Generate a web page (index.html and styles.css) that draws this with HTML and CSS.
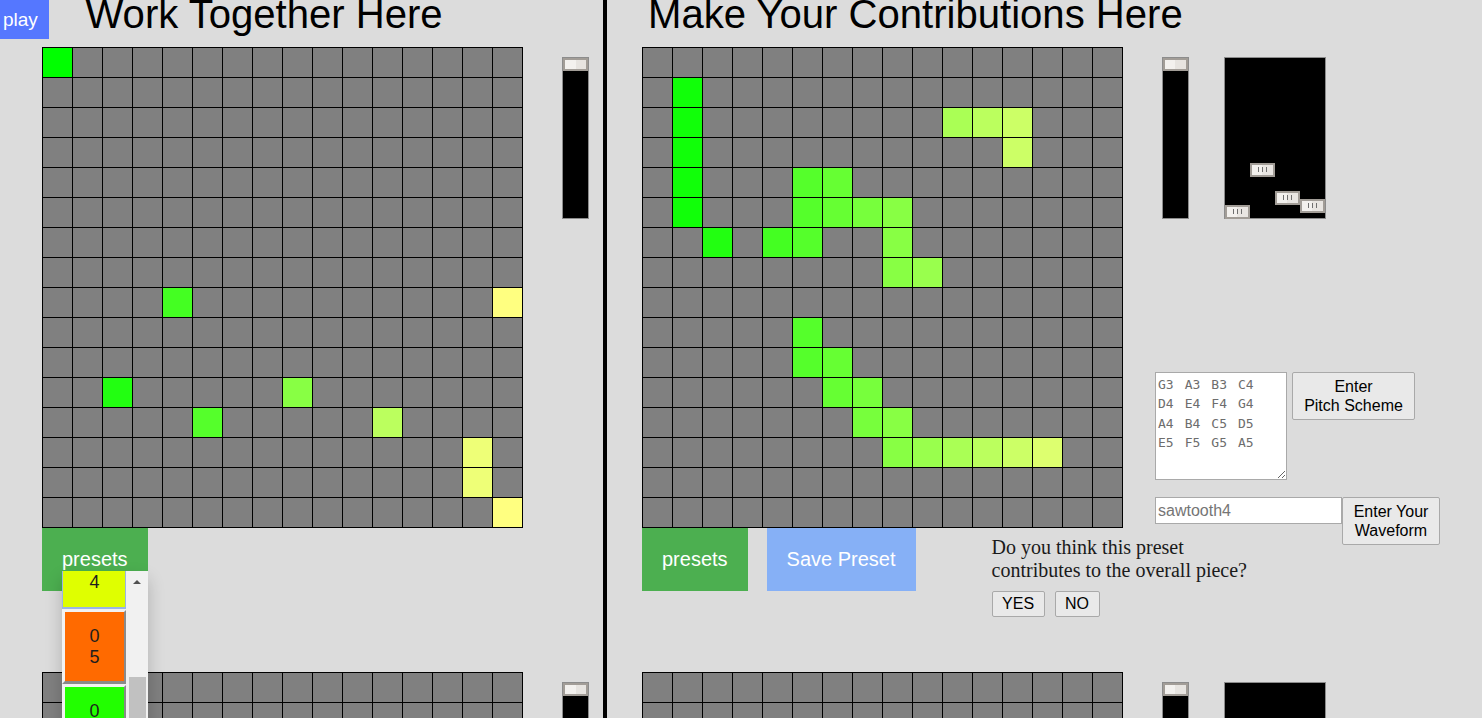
FILE: index.html
```html
<!DOCTYPE html>
<html lang="en">
<head>
<meta charset="utf-8">
<title>Work Together</title>
<link rel="stylesheet" href="styles.css">
</head>
<body>
<div class="page">
  <button class="play">play</button>

  <div class="col col-left">
    <h1 class="title">Work Together Here</h1>

    <section class="sec">
      <div class="main main-left">
        <div class="grid" data-on="0,0 4,8 15,8 2,11 8,11 5,12 11,12 14,13 14,14 15,15"></div>
        <div class="btnrow">
          <div class="dropwrap">
            <button class="dropbtn">presets</button>
            <div class="panel">
              <div class="list">
                <div class="item item-focus">0<br>4</div>
                <div class="item item-orange">0<br>5</div>
                <div class="item item-green">0<br>6</div>
              </div>
              <div class="sbar">
                <span class="arrow"></span>
                <span class="sthumb"></span>
              </div>
            </div>
          </div>
        </div>
      </div>
      <div class="side side-left">
        <div class="vs"><div class="th"></div></div>
      </div>
    </section>

    <section class="sec">
      <div class="main main-left">
        <div class="grid" data-on=""></div>
      </div>
      <div class="side side-left">
        <div class="vs"><div class="th"></div></div>
      </div>
    </section>
  </div>

  <div class="divider"></div>

  <div class="col col-right">
    <h1 class="title">Make Your Contributions Here</h1>

    <section class="sec">
      <div class="main main-right">
        <div class="grid" data-on="1,1 1,2 1,3 1,4 1,5 2,6 4,6 5,6 5,4 6,4 5,5 6,5 7,5 8,5 8,6 8,7 9,7 10,2 11,2 12,2 12,3 5,9 5,10 6,10 6,11 7,11 7,12 8,12 8,13 9,13 10,13 11,13 12,13 13,13"></div>
        <div class="btnrow">
          <button class="dropbtn">presets</button>
          <button class="dropbtn save">Save Preset</button>
          <div class="question">
            <p>Do you think this preset<br>contributes to the overall piece?</p>
            <div class="yn">
              <button class="btn">YES</button>
              <button class="btn">NO</button>
            </div>
          </div>
        </div>
      </div>
      <div class="side side-right">
        <div class="sliders">
          <div class="vs"><div class="th"></div></div>
          <div class="ms">
            <div class="mc"><div class="mth" style="margin-top:147px"></div></div>
            <div class="mc"><div class="mth" style="margin-top:105px"></div></div>
            <div class="mc"><div class="mth" style="margin-top:133px"></div></div>
            <div class="mc"><div class="mth" style="margin-top:141px"></div></div>
          </div>
        </div>
        <div class="pitchrow">
          <textarea class="pitch" spellcheck="false">G3 A3 B3 C4
D4 E4 F4 G4
A4 B4 C5 D5
E5 F5 G5 A5</textarea>
          <button class="btn btn-tall btn-pitch">Enter<br>Pitch Scheme</button>
        </div>
        <div class="waverow">
          <input class="wave" type="text" placeholder="sawtooth4">
          <button class="btn btn-tall btn-wave">Enter Your<br>Waveform</button>
        </div>
      </div>
    </section>

    <section class="sec">
      <div class="main main-right">
        <div class="grid" data-on=""></div>
      </div>
      <div class="side side-right">
        <div class="sliders">
          <div class="vs"><div class="th"></div></div>
          <div class="ms">
            <div class="mc"><div class="mth" style="margin-top:120px"></div></div>
            <div class="mc"><div class="mth" style="margin-top:110px"></div></div>
            <div class="mc"><div class="mth" style="margin-top:130px"></div></div>
            <div class="mc"><div class="mth" style="margin-top:140px"></div></div>
          </div>
        </div>
      </div>
    </section>
  </div>
</div>
<script src="script.js"></script>
</body>
</html>
```

FILE: styles.css
```css
* { box-sizing: border-box; }

html, body {
  margin: 0;
  height: 100%;
}

body {
  background: #dcdcdc;
  font-family: "Liberation Sans", Arial, sans-serif;
  overflow: hidden;
}

.page {
  position: relative;
  display: flex;
  height: 718px;
  overflow: hidden;
}

.play {
  position: absolute;
  left: 0;
  top: 0;
  z-index: 5;
  width: 49px;
  height: 39px;
  padding: 0 0 0 3px;
  border: none;
  background: #5577ff;
  color: #fff;
  font-family: "Liberation Sans", Arial, sans-serif;
  font-size: 19px;
  text-align: left;
}

.col { flex: none; }
.col-left { width: 603px; }
.col-right { flex: 1; }

.divider {
  flex: none;
  width: 4px;
  background: #000;
}

.title {
  margin: 0;
  height: 47px;
  font-size: 40.1px;
  font-weight: normal;
  line-height: 28px;
  white-space: nowrap;
  color: #000;
}
.col-left .title { padding-left: 85.5px; }
.col-right .title { padding-left: 41px; }

.sec {
  display: flex;
  align-items: flex-start;
  height: 625px;
}

.main {
  display: flex;
  flex-direction: column;
  width: 481px;
  flex: none;
}
.main-left { margin-left: 42px; }
.main-right { margin-left: 35px; }

.grid {
  display: grid;
  grid-template-columns: repeat(16, 29px);
  grid-auto-rows: 29px;
  gap: 1px;
  padding: 1px;
  width: 481px;
  height: 481px;
  background: #000;
}
.cell { background: #808080; }

.btnrow {
  display: flex;
  align-items: flex-start;
}

.dropwrap { position: relative; }

.dropbtn {
  display: block;
  margin: 0;
  padding: 20px;
  border: none;
  background: #4caf50;
  color: #fff;
  font-family: "Liberation Sans", Arial, sans-serif;
  font-size: 20px;
  line-height: 23px;
  white-space: nowrap;
}
.save {
  margin-left: 19px;
  background: #86b0f6;
}

.panel {
  position: absolute;
  left: 20px;
  top: 43px;
  z-index: 3;
  display: flex;
  width: 86px;
  height: 200px;
  overflow: hidden;
  background: #f1f1f1;
  box-shadow: 0 8px 16px 0 rgba(0, 0, 0, 0.2);
}

.list {
  display: flex;
  flex-direction: column;
  gap: 1px;
  width: 64px;
  margin-top: -36px;
}

.item {
  height: 74px;
  padding: 13.5px 0;
  border-style: solid;
  border-width: 2px 2px 3px 3px;
  border-color: #f2f2f2 #8a8a8a #8a8a8a #f2f2f2;
  color: #1e1e1e;
  font-size: 18px;
  line-height: 21px;
  text-align: center;
}
.item-focus {
  background: #dfff00;
  border-width: 2px 1px 2px 1px;
  border-color: #9bb6e4;
  padding-left: 2px;
  padding-right: 1px;
}
.item-orange { background: #ff6a00; }
.item-green { background: #22ff00; }

.sbar {
  display: flex;
  flex-direction: column;
  align-items: center;
  width: 22px;
  background: #f1f1f1;
}
.arrow {
  margin-top: 9px;
  width: 0;
  height: 0;
  border-left: 4px solid transparent;
  border-right: 4px solid transparent;
  border-bottom: 4px solid #505050;
}
.sthumb {
  margin-top: 93px;
  width: 17px;
  height: 120px;
  background: #c1c1c1;
}

.question {
  margin-left: 76px;
  margin-top: 8px;
  font-family: "Liberation Serif", "Times New Roman", serif;
  font-size: 20px;
  line-height: 23px;
  color: #1a1a1a;
  white-space: nowrap;
}
.question p { margin: 0; }

.yn {
  display: flex;
  gap: 10px;
  margin-top: 9px;
}

.btn {
  margin: 0;
  padding: 3px 9.5px;
  border: 1px solid #a9a9a9;
  border-radius: 2px;
  background: #e9e9e9;
  color: #000;
  font-family: "Liberation Sans", Arial, sans-serif;
  font-size: 16px;
  line-height: 18px;
}
.btn-tall {
  height: 48px;
  padding: 3.5px 0;
  line-height: 19.5px;
  text-align: center;
}
.btn-pitch { width: 123px; }
.btn-wave { width: 98px; }

.side { flex: none; }
.side-left {
  margin-left: 39px;
  margin-top: 10px;
}
.side-right {
  display: flex;
  flex-direction: column;
  margin-left: 32px;
}

.sliders {
  display: flex;
  gap: 35px;
  margin-top: 10px;
  padding-left: 7px;
}

.vs {
  width: 27px;
  height: 162px;
  border: 1px solid #8c8c8c;
  background: #000;
}
.th {
  height: 13px;
  border: 2px solid #a29d97;
  background: linear-gradient(90deg, #f3f1ee 50%, #e7e4e0 50%);
}

.ms {
  display: flex;
  width: 102px;
  height: 162px;
  border: 1px solid #8c8c8c;
  background: #000;
}
.mc { width: 25px; }
.mth {
  display: flex;
  justify-content: center;
  align-items: center;
  height: 13.5px;
  border: 2px solid #a29d97;
  background: linear-gradient(90deg, #f3f1ee 50%, #e9e6e2 50%);
}
.mth::after {
  content: "";
  width: 1px;
  height: 5px;
  background: #707070;
  box-shadow: -4px 0 0 #707070, 4px 0 0 #707070;
}

.pitchrow {
  display: flex;
  align-items: flex-start;
  gap: 5px;
  margin-top: 153px;
}
.pitch {
  margin: 0;
  width: 132px;
  height: 108px;
  padding: 2px;
  border: 1px solid #a9a9a9;
  background: #fff;
  color: #6d6d6d;
  font-family: "DejaVu Sans Mono", "Liberation Mono", monospace;
  font-size: 13px;
  line-height: 19.3px;
  word-spacing: 3.2px;
  overflow: hidden;
}

.waverow {
  display: flex;
  align-items: flex-start;
  margin-top: 17px;
}
.wave {
  margin: 0;
  width: 187px;
  height: 27px;
  padding: 1px 2px;
  border: 1px solid #a9a9a9;
  background: #fff;
  font-family: "Liberation Sans", Arial, sans-serif;
  font-size: 16px;
}
.wave::placeholder { color: #757575; }
```

FILE: script.js
```js
document.querySelectorAll('.grid').forEach(function (grid) {
  var on = {};
  (grid.dataset.on || '').split(' ').filter(Boolean).forEach(function (p) {
    on[p] = true;
  });
  for (var r = 0; r < 16; r++) {
    for (var c = 0; c < 16; c++) {
      var cell = document.createElement('div');
      cell.className = 'cell';
      if (on[c + ',' + r]) {
        cell.style.background = 'rgb(' + Math.round(17 * c) + ',255,' + Math.round(8.5 * c) + ')';
      }
      grid.appendChild(cell);
    }
  }
});
```
